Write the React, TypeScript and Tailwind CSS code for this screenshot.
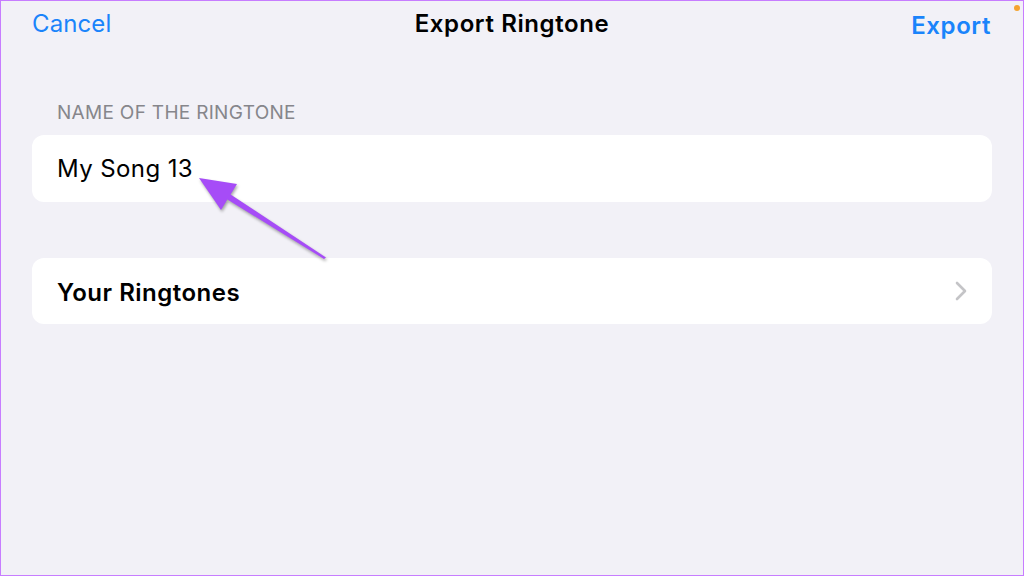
export default function App() {
  return (
    <div
      className="relative h-[576px] w-[1024px] overflow-hidden border border-[#c77dff] bg-[#f2f1f7] text-black"
      style={{ fontFamily: "Inter, 'Noto Sans', sans-serif" }}
    >
      <div className="absolute right-[3px] top-[4px] h-[6px] w-[6px] rounded-full bg-[#f5a431]" />

      <div className="px-[31px] pt-[7px]">
        <header className="relative flex h-8 items-start justify-between">
          <button type="button" className="text-[24px] leading-8 tracking-[0.1px] text-[#1a84fb]">
            Cancel
          </button>
          <h1 className="absolute left-1/2 top-0 -translate-x-1/2 text-[24px] font-semibold leading-8 tracking-[0.6px]">
            Export Ringtone
          </h1>
          <button type="button" className="mt-[2px] pr-[1px] text-[24px] font-semibold leading-8 tracking-[0.6px] text-[#1a84fb]">
            Export
          </button>
        </header>

        <p className="mt-[61px] pl-[25px] text-[19px] leading-6 tracking-[0.3px] text-[#86868b]">NAME OF THE RINGTONE</p>

        <div className="mt-[10px] flex h-[67px] items-center rounded-[12px] bg-white px-[25px]">
          <span className="text-[24px] leading-8 tracking-[0.4px]">My Song 13</span>
        </div>

        <div className="mt-[56px] flex h-[66px] items-center justify-between rounded-[12px] bg-white pl-[25px] pr-[25px]">
          <span className="mt-[3px] text-[24px] font-semibold leading-8 tracking-[0.5px]">Your Ringtones</span>
          <svg width="12" height="20" viewBox="0 0 12 20" fill="none">
            <path d="M2 2l8 8-8 8" stroke="#c4c4c7" strokeWidth="2.6" strokeLinecap="round" strokeLinejoin="round" />
          </svg>
        </div>
      </div>

      <svg
        className="pointer-events-none absolute left-0 top-0"
        width="1024"
        height="576"
        viewBox="0 0 1024 576"
        style={{ filter: "drop-shadow(1px 2px 1.5px rgba(0,0,0,0.35))" }}
      >
        <polygon
          points="325,256.5 229.6,193.5 236,183 198,177 220,209 226.4,198.5 323,258"
          fill="#a64cf7"
          strokeLinejoin="round"
        />
      </svg>
    </div>
  );
}
